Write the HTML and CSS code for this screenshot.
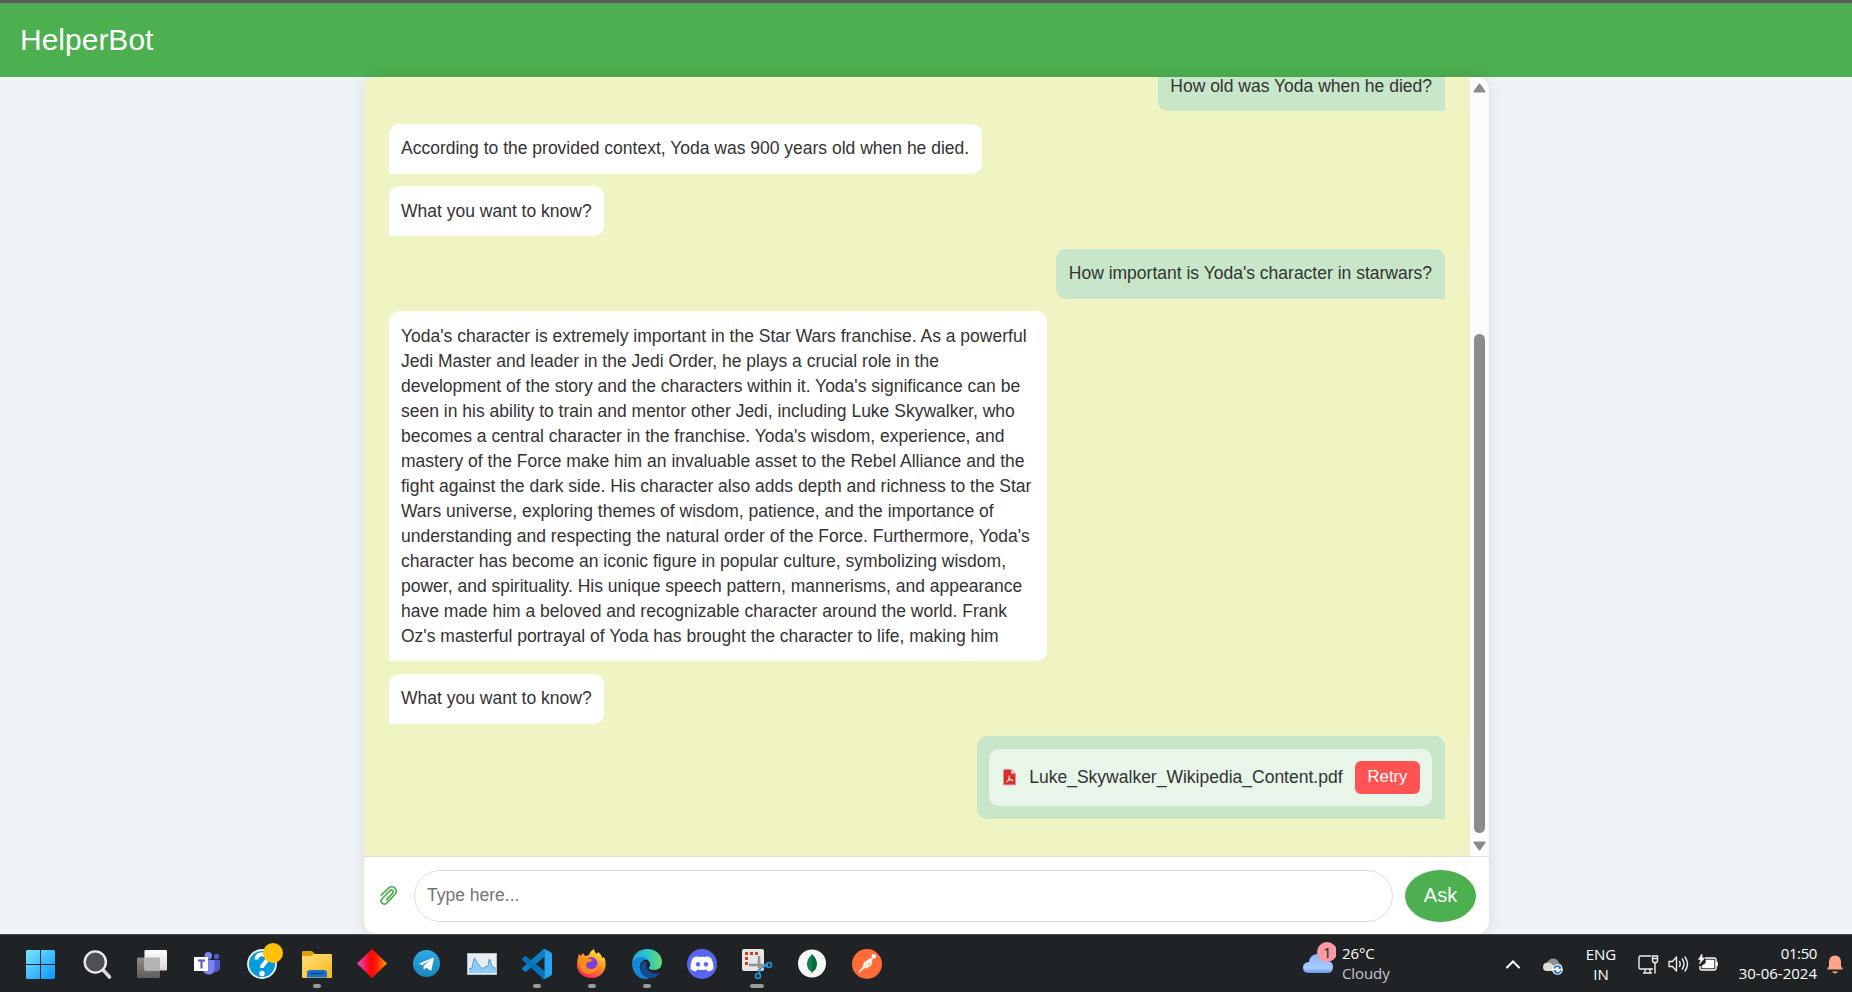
FILE: index.html
```html
<!DOCTYPE html>
<html lang="en">
<head>
<meta charset="utf-8">
<title>HelperBot</title>
<link rel="stylesheet" href="styles.css">
</head>
<body>
<header class="topbar"><h1 class="brand">HelperBot</h1></header>
<main class="page">
  <section class="chat">
    <div class="chat-body">
      <div class="messages">
        <div class="msg user">How old was Yoda when he died?</div>
        <div class="msg bot">According to the provided context, Yoda was 900 years old when he died.</div>
        <div class="msg bot">What you want to know?</div>
        <div class="msg user">How important is Yoda's character in starwars?</div>
        <div class="msg bot long">Yoda's character is extremely important in the Star Wars franchise. As a powerful<br>Jedi Master and leader in the Jedi Order, he plays a crucial role in the<br>development of the story and the characters within it. Yoda's significance can be<br>seen in his ability to train and mentor other Jedi, including Luke Skywalker, who<br>becomes a central character in the franchise. Yoda's wisdom, experience, and<br>mastery of the Force make him an invaluable asset to the Rebel Alliance and the<br>fight against the dark side. His character also adds depth and richness to the Star<br>Wars universe, exploring themes of wisdom, patience, and the importance of<br>understanding and respecting the natural order of the Force. Furthermore, Yoda's<br>character has become an iconic figure in popular culture, symbolizing wisdom,<br>power, and spirituality. His unique speech pattern, mannerisms, and appearance<br>have made him a beloved and recognizable character around the world. Frank<br>Oz's masterful portrayal of Yoda has brought the character to life, making him</div>
        <div class="msg bot">What you want to know?</div>
        <div class="msg user">
          <div class="file">
            <svg class="pdf" viewBox="0 0 13 17"><path d="M1 .5h7.500L12.500 4.500V16H.5V1z" fill="#d32f2f"/><path d="M8.300.8v4h4z" fill="#f6dcdc"/><path d="M6.200 6.500c.3 3-1 5.500-3.200 7M6.300 9c1 1.800 2.300 2.800 4 2.800M4.500 11.800c1.600-.9 3.200-1.200 5-.8" fill="none" stroke="#fff" stroke-width=".9"/><path d="M.5 16h12" stroke="#eeb4b4"/></svg>
            <span>Luke_Skywalker_Wikipedia_Content.pdf</span>
            <button class="retry">Retry</button>
          </div>
        </div>
      </div>
      <div class="scroll">
        <svg class="arrow" viewBox="0 0 13 10"><path d="M6.500 1.500L11.500 8.500H1.500z" fill="#8b8b8b" stroke="#8b8b8b" stroke-width="2" stroke-linejoin="round"/></svg>
        <div class="thumb"></div>
        <svg class="arrow" viewBox="0 0 13 10"><path d="M6.500 8.500L11.500 1.500H1.500z" fill="#8b8b8b" stroke="#8b8b8b" stroke-width="2" stroke-linejoin="round"/></svg>
      </div>
    </div>
    <form class="composer">
      <svg class="clip" viewBox="0 0 18 20"><path d="M1.300 9.200L8.300 2.300C10.300.3 13.300.4 15 2.100s1.700 4.500-.2 6.400l-7.900 8.300c-1.500 1.600-3.600 1.600-4.800.4s-1.200-3.200.2-4.700l7.500-7.700c.9-.9 2.200-.9 2.900-.2s.7 1.900-.2 2.800l-5.900 6.200" fill="none" stroke="#4caf50" stroke-width="1.700" stroke-linecap="round"/></svg>
      <input class="ask-input" type="text" placeholder="Type here...">
      <button class="ask" type="button">Ask</button>
    </form>
  </section>
</main>
<footer class="taskbar">
  <svg width="0" height="0" class="defs"><defs>
    <linearGradient id="win" x1="14" y1="16" x2="43" y2="45" gradientUnits="userSpaceOnUse"><stop offset="0" stop-color="#7be8ff"/><stop offset="1" stop-color="#0a93fb"/></linearGradient>
    <linearGradient id="wh" x1="0" y1="0" x2="0" y2="1"><stop offset="0" stop-color="#fff"/><stop offset="1" stop-color="#d6d6d8"/></linearGradient>
    <linearGradient id="gr" x1="0" y1="0" x2="0" y2="1"><stop offset="0" stop-color="#8a8a8a"/><stop offset="1" stop-color="#5e5e5e"/></linearGradient>
    <linearGradient id="fold" x1="0" y1="0" x2="1" y2="1"><stop offset="0" stop-color="#ffe07a"/><stop offset="1" stop-color="#f9b71d"/></linearGradient>
    <linearGradient id="dia" x1="0" x2="1"><stop offset="0" stop-color="#e550d8"/><stop offset=".45" stop-color="#fb0606"/><stop offset=".65" stop-color="#ff1c00"/><stop offset="1" stop-color="#ffa400"/></linearGradient>
    <linearGradient id="tg" x1="0" y1="0" x2="0" y2="1"><stop offset="0" stop-color="#31abe3"/><stop offset="1" stop-color="#1785bd"/></linearGradient>
    <linearGradient id="ff" x1=".8" y1="0" x2=".3" y2="1"><stop offset="0" stop-color="#fff04a"/><stop offset=".5" stop-color="#ff9020"/><stop offset="1" stop-color="#fb2060"/></linearGradient>
    <linearGradient id="edge" x1="0" x2="1"><stop offset="0" stop-color="#28a2dc"/><stop offset=".5" stop-color="#30c6cc"/><stop offset="1" stop-color="#63dd66"/></linearGradient>
    <linearGradient id="cloud" x1="0" y1="0" x2="0" y2="1"><stop offset="0" stop-color="#8cb8f7"/><stop offset=".75" stop-color="#a9caff"/><stop offset="1" stop-color="#5e96e8"/></linearGradient>
  </defs></svg>
  <div class="apps">
    <svg viewBox="0 0 55 58"><path d="M15 16h13v14H14V17zM29 16h13l1 1v13H29zM14 31h14v14H15l-1-1zM29 31h14v13l-1 1H29z" fill="url(#win)"/></svg>
    <svg viewBox="0 0 55 58"><path d="M37 37l5.500 6" stroke="#d9dbdd" stroke-width="3.600" stroke-linecap="round"/><circle cx="28.300" cy="28" r="10.600" fill="#4d5156" stroke="#ececee" stroke-width="2.400"/></svg>
    <svg viewBox="0 0 55 58"><rect x="15" y="23.500" width="23" height="20.500" rx="1.200" fill="url(#gr)"/><rect x="22.500" y="16" width="22.500" height="20.500" rx="1.200" fill="url(#wh)"/><path d="M22.500 23.500H38v13H23.500l-1-1z" fill="#b4b4b4"/></svg>
    <svg viewBox="0 0 55 58"><circle cx="39.500" cy="22.500" r="2.700" fill="#5059c9"/><path d="M35 26h8v7.500a4.700 4.700 0 0 1-7 4z" fill="#5059c9"/><circle cx="31.300" cy="21.700" r="3.700" fill="#7b83eb"/><path d="M26 26h11.500v9.500a5.800 5.800 0 0 1-11.500 0z" fill="#7b83eb"/><rect x="17" y="23" width="14" height="14" fill="#fff"/><path d="M21 26.500h7M24.500 26v8.500" stroke="#5059c9" stroke-width="2.100"/></svg>
    <svg viewBox="0 0 55 58"><circle cx="30" cy="30" r="14" fill="#069bdc" stroke="#e9f5fa" stroke-width="1.800"/><path d="M24.500 25.500c0-7.500 11.500-6.500 10.500 0-.5 3.500-5 4-5 8.500" fill="none" stroke="#fff" stroke-width="4"/><circle cx="30" cy="39.500" r="2.700" fill="#fff"/><circle cx="41" cy="19" r="10" fill="#ffc10a"/></svg>
    <svg viewBox="0 0 55 58"><path d="M15 18q0-1 1-1h8q1 0 2 1l2 2h10v9H15z" fill="#dfa00c"/><path d="M15 22h9l3-2h17q1 0 1 1v22q0 1-1 1H16q-1 0-1-1z" fill="url(#fold)"/><path d="M20 43.500V39q0-3 3-3h14q3 0 3 3v4.500z" fill="#1673c8"/><path d="M24 39.500h12" stroke="#064b8b" stroke-width="1.300" stroke-linecap="round"/><rect x="26" y="50" width="8" height="4" rx="2" fill="#989a9b"/></svg>
    <svg viewBox="0 0 55 58"><path d="M30 15l15 14.500L30 44 15 29.500z" fill="url(#dia)"/></svg>
    <svg viewBox="0 0 55 58"><circle cx="29.500" cy="29.500" r="13.500" fill="url(#tg)"/><path d="M22 29.500l14-5.700q1-.2.800.9l-2.300 11q-.4 1.400-1.600.6l-3.600-2.700-1.900 1.800q-.7.500-.8-.5v-3l7-6.200-8.600 5.500z" fill="#fff"/></svg>
    <svg viewBox="0 0 55 58"><rect x="15.500" y="19.500" width="29" height="21" fill="#e9edf1" stroke="#b7bec5"/><path d="M17 39v-4l3-1 2-9.500h1l2 4 4 5 2 1 3-2h2l1-7h1l2 7 4 2V39z" fill="#8fcdf4"/><path d="M17 35l3-1 2-9.500h1l2 4 4 5 2 1 3-2h2l1-7h1l2 7 4 2" fill="none" stroke="#4b9dd4"/></svg>
    <svg viewBox="0 0 55 58"><path d="M15.300 34l20-18 2.200-1v8L19.300 37.500q-1 .7-1.800 0l-2.200-2q-.6-.8 0-1.500z" fill="#0d7fc9"/><path d="M15.300 24.500l2.200-2q.8-.6 1.800 0L37.500 37v8l-2.200-1-20-18q-.6-.7 0-1.500z" fill="#0671bb"/><path d="M35.500 15.500q1-.8 2-.4l6 2.900q1.500.8 1.500 2.200v19.600q0 1.400-1.500 2.200l-6 2.900q-1.500.5-2.500-.6 2.500.8 2.500-1.700V17.200q0-2-2-1.700z" fill="#27a4f2"/><rect x="26" y="50" width="8" height="4" rx="2" fill="#989a9b"/></svg>
    <svg viewBox="0 0 55 58"><path d="M17 20l2 2 2-3 2 3 4-1q1-4 5-6 0 3 3 5l1-2q4 3 4 6l2-1c5 11-2 21-12 21-9 0-15-6-15-13q0-6 2-11z" fill="url(#ff)"/><circle cx="29" cy="29.500" r="6.500" fill="#7b3fdb"/><path d="M16 25l5-2 5 1 5 2-3 2q-4 0-4 3 1 4 5 4 6 0 6-6 1 10-8 11-9-1-10-10z" fill="#ff8c1a"/><rect x="26" y="50" width="8" height="4" rx="2" fill="#989a9b"/></svg>
    <svg viewBox="0 0 55 58"><path d="M15 29c1-9 7-14 15-14 9 0 15 6 15 13 0 5-3 8-8 8-3 0-5-1-5-2s2-2 1-5-5-5-9-5q-6 0-9 5z" fill="url(#edge)"/><path d="M15 29q3-6 9-6 5 0 8 3-7-1-9 5c-1 7 4 12 10 13-10 4-18-5-18-15z" fill="#1389dd"/><path d="M28.500 27q-6 3-5 9 2 9 12 8 5-1 8-6-5 3-10 0-5-3-4-8 0-2-1-3z" fill="#124c93"/><rect x="26" y="50" width="8" height="4" rx="2" fill="#989a9b"/></svg>
    <svg viewBox="0 0 55 58"><circle cx="30" cy="30" r="15" fill="#5865f2"/><path d="M26 23l-.7-.8q-2.500.5-4.500 1.700-2.700 5-2.300 11 2.500 2 5.500 2.600l1.200-2.100q4.800 1.200 9.600 0l1.200 2.100q3-.6 5.500-2.600.4-6-2.300-11-2-1.200-4.500-1.700L34 23q-4-.6-8 0z" fill="#fff"/><ellipse cx="26" cy="30.300" rx="2.100" ry="2.400" fill="#5865f2"/><ellipse cx="34" cy="30.300" rx="2.100" ry="2.400" fill="#5865f2"/></svg>
    <svg viewBox="0 0 55 58"><rect x="15" y="15" width="22" height="22" rx="2" fill="#e5e7e9"/><path d="M19.500 31V19.500H32" fill="none" stroke="#d84010" stroke-width="3" stroke-dasharray="3 2"/><path d="M22 31h14M32 22v12" stroke="#8d9398" stroke-width="2.600"/><path d="M31 37l5-5 5-1" stroke="#90999f" stroke-width="2.500" fill="none"/><circle cx="42" cy="31" r="2.500" fill="none" stroke="#1897e6" stroke-width="1.600"/><circle cx="31" cy="42" r="2.500" fill="none" stroke="#1897e6" stroke-width="1.600"/><path d="M36 33l4-1.500M33 36l-1 4" stroke="#1897e6" stroke-width="2"/><rect x="23" y="50" width="14" height="4" rx="2" fill="#989a9b"/></svg>
    <svg viewBox="0 0 55 58"><circle cx="30" cy="29.500" r="14" fill="#f8f8f8"/><path d="M30 20q5 5 5 10 0 5-4.500 8l-.5 2z" fill="#026b45"/><path d="M30 20q-5 5-5 10 0 5 4.500 8l.5 2z" fill="#12834f"/></svg>
    <svg viewBox="0 0 55 58"><circle cx="30" cy="30" r="15" fill="#ff6c37"/><circle cx="36.800" cy="22.200" r="2.200" fill="#fff"/><path d="M35 24.500l-7 4-1.500 3.500M34.500 25.500l-5.500 6-6.500 6M34.500 25.500l-1 5.500-4 2.500" fill="none" stroke="#fff0ea" stroke-width="1.800" stroke-linecap="round" stroke-linejoin="round"/><path d="M33 26l-5 6" stroke="#fff0ea" stroke-width="3.500"/></svg>
  </div>
  <div class="weather">
    <svg viewBox="0 0 36 40"><path d="M8 31q-5-.5-5-5.500t6-5.500q1-8 9-8t9.500 7q5.500.5 5.500 6t-5 6z" fill="url(#cloud)"/><circle cx="27" cy="10" r="10" fill="#ff99a4"/></svg>
    <span class="count">1</span>
    <div class="lines"><div>26°C</div><div class="dim">Cloudy</div></div>
  </div>
  <div class="tray">
    <svg class="chev" viewBox="0 0 16 12"><path d="M2 9.500L8 3.500l6 6" fill="none" stroke="#fff" stroke-width="2" stroke-linecap="round"/></svg>
    <svg class="drive" viewBox="0 0 22 20"><path d="M5 7q2-5 7-4.500 4 .5 5 4.500 3 1 3 4H8z" fill="#8e9090"/><path d="M1 11q0-4 4-4.500 4-.5 6.500 3L16 15H4q-3-.5-3-4z" fill="#dcdddd"/><circle cx="15.500" cy="13.500" r="5.300" fill="#fff"/><path d="M12 12.500q1-2.500 3.500-2.500t3 2h-2M19 14.500Q18 17 15.500 17t-3-2h2" fill="none" stroke="#1472c4" stroke-width="1.500"/></svg>
    <div class="lines lang"><div>ENG</div><div>IN</div></div>
    <svg class="status" viewBox="0 0 22 22"><path d="M14 3H3.500Q2 3 2 4.500v10Q2 16 3.500 16H16M6 20h9M8 16v4M13 16v4" fill="none" stroke="#eee" stroke-width="1.400"/><path d="M15.500 3h5v5l-1 1.500h-3l-1-1.500zM18 9.500V20.500M15.500 5.500h5" fill="none" stroke="#eee" stroke-width="1.400"/></svg>
    <svg class="status" viewBox="0 0 22 22"><path d="M2 8.500h3.500l4-4.500v14l-4-4.500H2z" fill="none" stroke="#eee" stroke-width="1.400" stroke-linejoin="round"/><path d="M12.500 8.500q1.500 2.500 0 5M15.300 6q3.300 5 0 10M18 4q5 7 0 14" fill="none" stroke="#eee" stroke-width="1.400" stroke-linecap="round"/></svg>
    <svg class="status" viewBox="0 0 22 22"><path d="M8 5h9q2 0 2 2v8q0 2-2 2H5q-2 0-2-2v-2" fill="none" stroke="#fff" stroke-width="1.400"/><path d="M9 7h8v8H5v-2l4-3zM19 9h1.500v4H19z" fill="#fff" stroke="#fff" stroke-width=".6"/><path d="M5 1L1.500 6.500H4L2.500 11 7.500 5H5z" fill="#fff" stroke="#fff" stroke-width=".6"/></svg>
    <div class="lines clock"><div>01:50</div><div>30-06-2024</div></div>
    <svg class="bell" viewBox="0 0 18 20"><path d="M3 7.500q.5-6 6-6t6 6V12l2 3.500H1L3 12z" fill="#fda586"/><path d="M6 17.500h6q-1 2-3 2t-3-2z" fill="#fda586"/></svg>
  </div>
</footer>
</body>
</html>
```
FILE: styles.css
```css
* { box-sizing: border-box; }
body {
  margin: 0;
  width: 1852px;
  height: 992px;
  overflow: hidden;
  display: flex;
  flex-direction: column;
  background: #eff3f6;
  color: #333;
  font-family: "Liberation Sans", Arial, sans-serif;
}
.topbar {
  flex: none;
  height: 77px;
  padding: 0 20px;
  background: #4caf50;
  border-top: 3px solid #5b585f;
  display: flex;
  align-items: center;
}
.brand { margin: 0; font-size: 30px; font-weight: 400; color: #fff; }
.page { flex: none; height: 857px; display: flex; justify-content: center; }
.chat {
  width: 1125px;
  display: flex;
  flex-direction: column;
  background: #fff;
  border-radius: 12.5px;
  overflow: hidden;
  box-shadow: 0 0 12.5px rgba(0, 0, 0, .1);
}
.chat-body { height: 779px; display: flex; background: #f0f4c3; }
.messages {
  flex: 1;
  padding: 0 25px 37.5px;
  display: flex;
  flex-direction: column;
  justify-content: flex-end;
  gap: 12.5px;
  overflow: hidden;
}
.msg {
  flex: none;
  padding: 12.5px;
  font-size: 17.5px;
  line-height: 25px;
  white-space: nowrap;
  border-radius: 10px;
}
.bot { align-self: flex-start; background: #fff; border-bottom-left-radius: 0; }
.user { align-self: flex-end; background: #c8e6c9; border-bottom-right-radius: 0; }
.long { width: 658px; }
.file {
  height: 57.5px;
  padding: 0 12px 0 12.5px;
  display: flex;
  align-items: center;
  gap: 12.5px;
  background: #e8f5e9;
  border-radius: 10px;
}
.pdf { width: 13px; height: 17px; margin: 0 .5px 0 1.5px; }
.retry {
  width: 65px;
  height: 33px;
  padding: 0;
  border: 0;
  border-radius: 6px;
  background: #ff5252;
  color: #fff;
  font: 16.67px "Liberation Sans", Arial, sans-serif;
}
.scroll {
  width: 19px;
  padding: 6px 0 5px;
  background: #fcfcfc;
  display: flex;
  flex-direction: column;
  align-items: center;
}
.arrow { width: 13px; height: 10px; }
.thumb { width: 11px; height: 499px; margin: auto 0 8px; border-radius: 6px; background: #8b8b8b; }
.composer {
  flex: 1;
  padding: 0 12.5px 0 16px;
  border-top: 1px solid #ddd;
  display: flex;
  align-items: center;
}
.clip { width: 18px; height: 20px; margin-right: 16px; }
.ask-input {
  flex: 1;
  height: 52px;
  padding: 0 12.5px;
  border: 1px solid #ddd;
  border-radius: 26px;
  font: 17.5px "Liberation Sans", Arial, sans-serif;
  background: #fff;
}
.ask-input::placeholder { color: #757575; }
.ask {
  width: 71px;
  height: 52px;
  padding: 0;
  margin-left: 12px;
  border: 0;
  border-radius: 50%;
  background: #4caf50;
  color: #fff;
  font: 20px "Liberation Sans", Arial, sans-serif;
}
.taskbar {
  flex: none;
  height: 58px;
  padding-left: 12px;
  display: flex;
  background: #202325;
  border-top: 1px solid #45484a;
  color: #fff;
  font: 15px/20px "Open Sans", "Noto Sans", sans-serif;
}
.defs { position: absolute; }
.apps { width: 1288px; margin-top: -1px; display: flex; }
.apps svg { width: 55px; height: 58px; flex: none; }
.weather { position: relative; width: 200px; display: flex; }
.weather svg { width: 36px; height: 40px; margin-top: 7px; }
.count { position: absolute; left: 23px; top: 7px; color: #222; }
.lines { padding-top: 8px; }
.weather .lines { margin-left: 6px; letter-spacing: -.1px; }
.dim { color: #c4c5c6; }
.tray { flex: 1; display: flex; align-items: center; padding: 0 8px 0 5px; }
.chev { width: 16px; height: 12px; }
.drive { width: 22px; height: 20px; margin-left: 21px; margin-top: 4px; }
.lang { width: 40px; margin-left: 17px; text-align: center; }
.lines.lang, .lines.clock { align-self: flex-start; }
.lang { padding-top: 9px; }
.status { width: 22px; height: 22px; margin-left: 8px; }
.lang + .status { margin-left: 16px; }
.clock { flex: 1; text-align: right; }
.clock div:first-child { letter-spacing: -.4px; }
.bell { width: 18px; height: 20px; margin-left: 9px; }
```
